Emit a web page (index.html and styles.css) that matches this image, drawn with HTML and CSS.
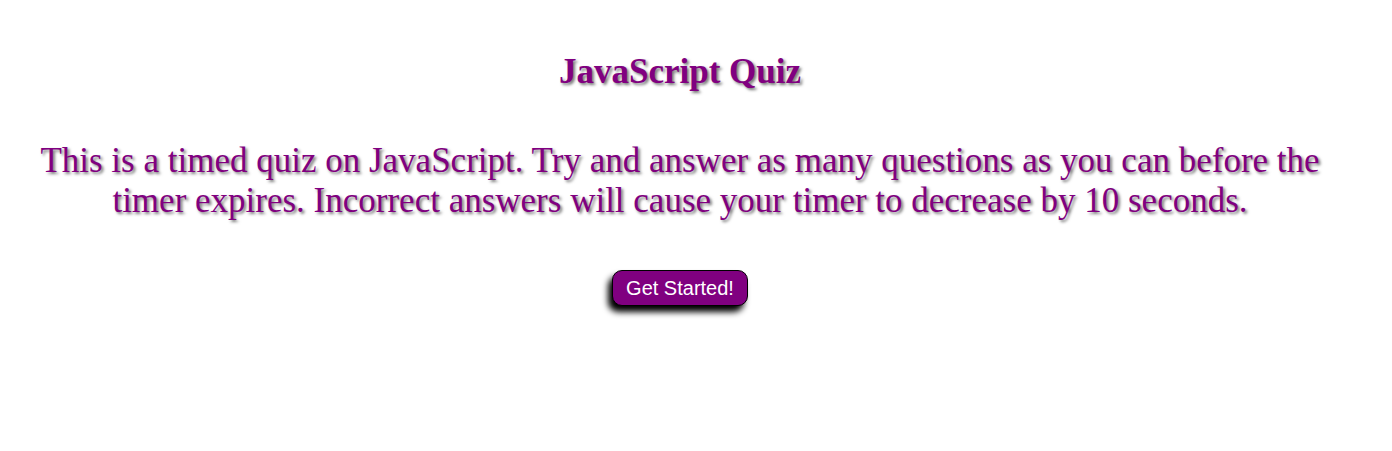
FILE: index.html
```html
<!DOCTYPE html>
<html>
<head>
<meta charset="utf-8">
<link rel="stylesheet" href="styles.css">
</head>
<body>
<main class="quiz">
  <h1 class="title">JavaScript Quiz</h1>
  <p class="intro">This is a timed quiz on JavaScript. Try and answer as many questions as you can before the timer expires. Incorrect answers will cause your timer to decrease by 10 seconds.</p>
  <button class="start">Get Started!</button>
</main>
</body>
</html>
```
FILE: styles.css
```css
html, body {
  min-height: 100%;
}
body {
  margin: 0;
  padding: 8px 40px 40px 8px;
  background: #fff;
  font-family: "Liberation Serif", "Times New Roman", serif;
}
.quiz {
  display: flex;
  flex-direction: column;
  align-items: center;
  text-align: center;
  padding: 0 10px;
}
.title {
  font-size: 35px;
  font-weight: bold;
  color: #800080;
  text-shadow: 2px 2px 3px #777;
  margin: 44px 0 0;
  line-height: 40px;
}
.intro {
  font-size: 35px;
  color: #800080;
  text-shadow: 2px 2px 3px #777;
  margin: 49px 0 0;
  line-height: 40px;
}
.start {
  margin-top: 49px;
  margin-bottom: 40px;
  font-family: "Liberation Sans", Arial, sans-serif;
  font-size: 20px;
  line-height: 24px;
  color: #fff;
  background: #800080;
  border: 1px solid #000;
  border-radius: 10px;
  padding: 5px 13px;
  box-shadow: -4px 6px 6px #000;
}
```
